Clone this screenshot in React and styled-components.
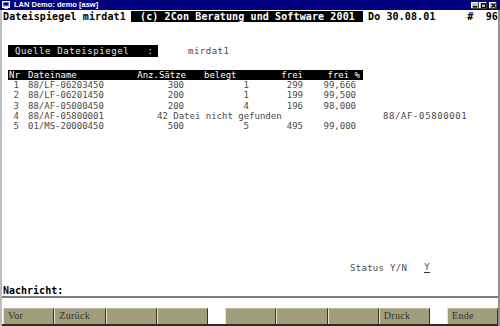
import React from "react";
import styled, { createGlobalStyle } from "styled-components";

const Global = createGlobalStyle`
  html, body { margin: 0; padding: 0; width: 500px; height: 326px; overflow: hidden; background: #fff; }
  #root { width: 500px; height: 326px; }
`;

const Window = styled.div`
  width: 500px;
  height: 326px;
  display: flex;
  flex-direction: column;
  font-family: "DejaVu Sans Mono", "Liberation Mono", monospace;
  background: #fff;
  overflow: hidden;
`;

const TitleBar = styled.div`
  height: 10px;
  flex: none;
  background: #000080;
  display: flex;
  align-items: center;
  padding: 0 3px 0 2px;
  gap: 4px;
`;

const TitleText = styled.span`
  flex: 1;
  color: #fff;
  font: bold 7.5px "Liberation Sans", Arial, sans-serif;
  line-height: 10px;
  white-space: nowrap;
`;

const Controls = styled.div`
  display: flex;
  align-items: center;
`;

const CtrlButton = styled.div`
  width: 8px;
  height: 7px;
  margin-left: ${(p) => p.$gap || 0}px;
  background: #c0c0c0;
  box-shadow: inset -1px -1px #404040, inset 1px 1px #fff;
  display: flex;
  align-items: center;
  justify-content: center;
  svg { display: block; }
`;

const Frame = styled.div`
  flex: 1;
  display: flex;
  flex-direction: column;
  border-left: 2px solid #bdbdbd;
  border-right: 2px solid #8f8f8f;
  min-height: 0;
`;

const Terminal = styled.div`
  height: 286px;
  flex: none;
  display: flex;
  flex-direction: column;
  padding-left: 1px;
  overflow: hidden;
`;

const TopRow = styled.div`
  margin-top: 1px;
  height: 11px;
  display: flex;
  font-weight: bold;
  font-size: 10px;
  letter-spacing: 0.12px;
  line-height: 11px;
  white-space: pre;
  color: #000;
`;

const Plain = styled.span`
  width: ${(p) => p.$w}px;
  flex: none;
  margin-left: ${(p) => p.$ml || 0}px;
`;

const Reverse = styled.span`
  width: ${(p) => p.$w}px;
  flex: none;
  background: #000;
  color: #fff;
  padding-left: ${(p) => p.$pl || 0}px;
  box-sizing: border-box;
`;

const PageNo = styled.span`
  margin-left: auto;
`;

const FieldRow = styled.div`
  margin-top: ${(p) => p.$mt || 0}px;
  margin-left: ${(p) => p.$ml || 0}px;
  height: ${(p) => p.$h || 12}px;
  display: flex;
  align-items: center;
  white-space: pre;
`;

const Label = styled.span`
  width: ${(p) => p.$w}px;
  height: 100%;
  flex: none;
  box-sizing: border-box;
  background: #000;
  color: #e6e6e6;
  font-size: 9px;
  letter-spacing: 0.6px;
  line-height: 12px;
  padding-left: 7px;
`;

const Value = styled.span`
  margin-left: ${(p) => p.$ml || 0}px;
  color: #454545;
  font-size: 9px;
  letter-spacing: ${(p) => p.$ls || 0}px;
`;

const Table = styled.div`
  margin-top: 13px;
  margin-left: 5px;
  display: flex;
  flex-direction: column;
`;

const cols = "13px 114px 51px 64px 54px 59px";

const HeaderGrid = styled.div`
  display: grid;
  grid-template-columns: ${cols};
  width: 355px;
  height: 10px;
  background: #000;
  color: #fff;
  font-size: 9px;
  letter-spacing: 0.3px;
  line-height: 10px;
  white-space: pre;
`;

const DataGrid = styled.div`
  display: grid;
  grid-template-columns: ${cols} 127px;
  height: 10.3px;
  color: #4a4a4a;
  font-size: 9px;
  line-height: 10.3px;
  white-space: pre;
`;

const Cell = styled.span`
  text-align: ${(p) => p.$align || "left"};
  padding-left: ${(p) => p.$pl || 0}px;
  padding-right: ${(p) => p.$pr || 0}px;
  grid-column: ${(p) => p.$span || "auto"};
  letter-spacing: ${(p) => p.$ls || 0}px;
  overflow: visible;
`;

const StatusRow = styled.div`
  margin-top: auto;
  height: 11px;
  padding-left: 347px;
  display: flex;
  align-items: center;
  white-space: pre;
  color: #4a4a4a;
  font-size: 9px;
  letter-spacing: 0.3px;
`;

const Entry = styled.span`
  margin-left: 17px;
  line-height: 9px;
  border-bottom: 1px solid #333;
`;

const MessageRow = styled.div`
  margin-top: 12px;
  height: 11px;
  font-weight: bold;
  font-size: 10px;
  line-height: 11px;
  color: #000;
`;

const Divider = styled.div`
  height: 2px;
  flex: none;
  background: #7d7d7d;
`;

const Gap = styled.div`
  height: 10px;
  flex: none;
`;

const ButtonBar = styled.div`
  height: 16px;
  flex: none;
  display: flex;
  gap: 17px;
  padding-left: 1px;
  overflow: hidden;
`;

const Group = styled.div`
  display: flex;
  flex: none;
`;

const FKey = styled.div`
  width: 51.25px;
  height: 16px;
  flex: none;
  box-sizing: border-box;
  background-color: #a29e7c;
  background-image: repeating-conic-gradient(#a8a583 0% 25%, #9b9775 0% 50%);
  background-size: 2px 2px;
  border-left: 1px solid #e6e4d6;
  border-right: 1px solid #34342a;
  border-top: 1px solid #bab69c;
  font-family: "Liberation Serif", "Times New Roman", serif;
  font-size: 10px;
  letter-spacing: 0.3px;
  color: #33332e;
  line-height: 14px;
  padding-left: 4px;
  white-space: nowrap;
`;

const BottomEdge = styled.div`
  height: 2px;
  flex: none;
  background: #2c2c22;
`;

const rows = [
  ["1", "88/LF-06203450", "300", "1", "299", "99,666"],
  ["2", "88/LF-06201450", "200", "1", "199", "99,500"],
  ["3", "88/AF-05000450", "200", "4", "196", "98,000"],
  null,
  ["5", "01/MS-20000450", "500", "5", "495", "99,000"],
];

const keys = [
  ["Vor", "Zurück", "", ""],
  ["", "", "", "Druck"],
  ["Ende"],
];

function AppIcon() {
  return (
    <svg width="8" height="8" viewBox="0 0 8 8">
      <rect x="0.5" y="0.5" width="7" height="6" fill="#c0c0c0" stroke="#fff" strokeWidth="1" />
      <rect x="1.5" y="1.5" width="5" height="3" fill="#0000a0" />
      <rect x="2" y="7" width="4" height="1" fill="#c0c0c0" />
    </svg>
  );
}

export default function App() {
  return (
    <Window>
      <Global />
      <TitleBar>
        <AppIcon />
        <TitleText>LAN Demo: demo [asw]</TitleText>
        <Controls>
          <CtrlButton>
            <svg width="4" height="5" viewBox="0 0 4 5"><rect x="0" y="3" width="4" height="1.5" fill="#000" /></svg>
          </CtrlButton>
          <CtrlButton>
            <svg width="5" height="5" viewBox="0 0 5 5"><rect x="0.5" y="0.5" width="4" height="4" fill="none" stroke="#000" strokeWidth="1" /><rect x="0" y="0" width="5" height="1.5" fill="#000" /></svg>
          </CtrlButton>
          <CtrlButton $gap={2}>
            <svg width="5" height="5" viewBox="0 0 5 5"><path d="M0.5 0.5 L4.5 4.5 M4.5 0.5 L0.5 4.5" stroke="#000" strokeWidth="1.1" /></svg>
          </CtrlButton>
        </Controls>
      </TitleBar>
      <Frame>
        <Terminal>
          <TopRow>
            <Plain $w={128}>Dateispiegel mirdat1</Plain>
            <Reverse $w={232} $pl={9}>(c) 2Con Beratung und Software 2001</Reverse>
            <Plain $ml={5}>Do 30.08.01</Plain>
            <PageNo>#  96</PageNo>
          </TopRow>
          <FieldRow $mt={23} $ml={5} $h={12}>
            <Label $w={150}>{"Quelle Dateispiegel   :"}</Label>
            <Value $ml={30} $ls={0.5}>mirdat1</Value>
          </FieldRow>
          <Table>
            <HeaderGrid>
              <Cell $pl={1}>Nr</Cell>
              <Cell $pl={7}>Dateiname</Cell>
              <Cell $align="right">Anz.Sätze</Cell>
              <Cell $pl={18}>belegt</Cell>
              <Cell $align="right" $pr={1}>frei</Cell>
              <Cell $align="right" $pr={3}>frei %</Cell>
            </HeaderGrid>
            {rows.map((r, i) =>
              r ? (
                <DataGrid key={i}>
                  <Cell $align="right" $pr={2}>{r[0]}</Cell>
                  <Cell $pl={7}>{r[1]}</Cell>
                  <Cell $align="right" $pr={2}>{r[2]}</Cell>
                  <Cell $align="right" $pr={1}>{r[3]}</Cell>
                  <Cell $align="right" $pr={1}>{r[4]}</Cell>
                  <Cell $align="right" $pr={7}>{r[5]}</Cell>
                </DataGrid>
              ) : (
                <DataGrid key={i}>
                  <Cell $align="right" $pr={2}>4</Cell>
                  <Cell $pl={7}>88/AF-05800001</Cell>
                  <Cell $span="3 / 7" $pl={22}>42 Datei nicht gefunden</Cell>
                  <Cell $pl={20} $ls={0.6}>88/AF-05800001</Cell>
                </DataGrid>
              )
            )}
          </Table>
          <StatusRow>
            Status Y/N<Entry>Y</Entry>
          </StatusRow>
          <MessageRow>Nachricht:</MessageRow>
        </Terminal>
        <Divider />
        <Gap />
        <ButtonBar>
          {keys.map((g, gi) => (
            <Group key={gi}>
              {g.map((k, ki) => (
                <FKey key={ki}>{k}</FKey>
              ))}
            </Group>
          ))}
        </ButtonBar>
        <BottomEdge />
      </Frame>
    </Window>
  );
}
